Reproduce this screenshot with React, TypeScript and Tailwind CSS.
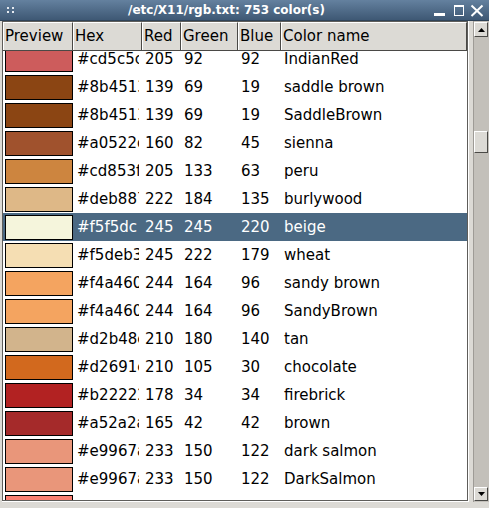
import React from "react";

type Row = [string, number, number, number, string];

const rows: Row[] = [
  ["#cd5c5c", 205, 92, 92, "IndianRed"],
  ["#8b4513", 139, 69, 19, "saddle brown"],
  ["#8b4513", 139, 69, 19, "SaddleBrown"],
  ["#a0522d", 160, 82, 45, "sienna"],
  ["#cd853f", 205, 133, 63, "peru"],
  ["#deb887", 222, 184, 135, "burlywood"],
  ["#f5f5dc", 245, 245, 220, "beige"],
  ["#f5deb3", 245, 222, 179, "wheat"],
  ["#f4a460", 244, 164, 96, "sandy brown"],
  ["#f4a460", 244, 164, 96, "SandyBrown"],
  ["#d2b48c", 210, 180, 140, "tan"],
  ["#d2691e", 210, 105, 30, "chocolate"],
  ["#b22222", 178, 34, 34, "firebrick"],
  ["#a52a2a", 165, 42, 42, "brown"],
  ["#e9967a", 233, 150, 122, "dark salmon"],
  ["#e9967a", 233, 150, 122, "DarkSalmon"],
  ["#fa8072", 250, 128, 114, "salmon"],
];

function HeaderCell({ label, w }: { label: string; w: string }) {
  return (
    <div
      className={`${w} shrink-0 h-full flex items-center pl-[1px] border-l border-t border-l-white border-t-white border-r border-r-[#4a4946] overflow-hidden whitespace-nowrap`}
    >
      {label}
    </div>
  );
}

function UpArrow() {
  return (
    <svg width="7" height="4" viewBox="0 0 7 4">
      <polygon points="0,4 7,4 3.5,0" fill="#000" />
    </svg>
  );
}

function DownArrow() {
  return (
    <svg width="7" height="4" viewBox="0 0 7 4">
      <polygon points="0,0 7,0 3.5,4" fill="#000" />
    </svg>
  );
}

export default function App() {
  return (
    <div className="w-[489px] h-[508px] bg-[#dcdad5] flex flex-col overflow-hidden font-['DejaVu_Sans',sans-serif] text-black">
      {/* Title bar */}
      <div className="h-[21px] shrink-0 flex items-center bg-gradient-to-b from-[#64819f] to-[#3e5874] border-b border-b-[#2e4257]">
        <div className="w-[28px] h-full flex items-start pt-[7px] pl-[7px]">
          <svg width="9" height="7" viewBox="0 0 9 7">
            <rect x="0" y="0" width="2" height="2" fill="#e6ebf1" />
            <rect x="5" y="0" width="2" height="2" fill="#e6ebf1" />
            <rect x="0" y="4" width="2" height="2" fill="#e6ebf1" />
            <rect x="5" y="4" width="2" height="2" fill="#e6ebf1" />
          </svg>
        </div>
        <div className="flex-1 text-center text-white font-bold text-[12px] leading-none whitespace-nowrap">
          /etc/X11/rgb.txt: 753 color(s)
        </div>
        <div className="w-[64px] h-full">
          <svg width="64" height="20" viewBox="0 0 64 20">
            <rect x="9" y="13" width="11" height="3" fill="#fff" />
            <rect x="29.5" y="5.5" width="9" height="10" fill="none" stroke="#fff" strokeWidth="1" />
            <rect x="29" y="5" width="10" height="2" fill="#fff" />
            <path d="M46.5 5.5 L57.5 16 M57.5 5.5 L46.5 16" stroke="#fff" strokeWidth="2" />
          </svg>
        </div>
      </div>

      {/* Body */}
      <div className="flex-1 min-h-0 flex pl-[2px] pb-[6px]">
        <div className="w-[467px] shrink-0 flex border-r border-b border-r-white border-b-white">
          <div className="w-[466px] flex flex-col border border-[#5e5d5a] bg-white overflow-hidden">
            {/* Header */}
            <div className="h-[29px] shrink-0 flex bg-[#dcdad5] border-b border-b-[#4a4946] text-[15px]">
              <HeaderCell label="Preview" w="w-[70px]" />
              <HeaderCell label="Hex" w="w-[69px]" />
              <HeaderCell label="Red" w="w-[39px]" />
              <HeaderCell label="Green" w="w-[57px]" />
              <HeaderCell label="Blue" w="w-[43px]" />
              <HeaderCell label="Color name" w="w-[186px]" />
            </div>
            {/* Rows */}
            <div className="flex-1 min-h-0 overflow-hidden">
              <div className="mt-[-6px] text-[15px]">
                {rows.map((r, i) => {
                  const sel = r[4] === "beige";
                  return (
                    <div
                      key={i}
                      className={`h-[28px] flex ${sel ? "bg-[#4b6983] text-white" : ""}`}
                    >
                      <div className="w-[70px] shrink-0 pt-[2px] pl-[2px]">
                        <div
                          className="w-[68px] h-[25px] border border-black"
                          style={{ backgroundColor: r[0] }}
                        />
                      </div>
                      <div className="w-[69px] shrink-0 pl-[4px] flex items-center">
                        <div className="w-[62px] overflow-hidden whitespace-nowrap">{r[0]}</div>
                      </div>
                      <div className="w-[39px] shrink-0 pl-[3px] flex items-center overflow-hidden whitespace-nowrap">
                        {r[1]}
                      </div>
                      <div className="w-[57px] shrink-0 pl-[3px] flex items-center overflow-hidden whitespace-nowrap">
                        {r[2]}
                      </div>
                      <div className="w-[43px] shrink-0 pl-[3px] flex items-center overflow-hidden whitespace-nowrap">
                        {r[3]}
                      </div>
                      <div className="w-[186px] shrink-0 pl-[3px] flex items-center overflow-hidden whitespace-nowrap">
                        {r[4]}
                      </div>
                    </div>
                  );
                })}
              </div>
            </div>
          </div>
        </div>
        {/* gap */}
        <div className="w-[4px] shrink-0" />
        {/* Scrollbar */}
        <div className="w-[16px] shrink-0 bg-[#c3c0ba] border-l border-l-[#9e9b96] flex flex-col pt-[1px] pb-[1px]">
          <div className="w-[14px] h-[15px] shrink-0 bg-[#dcdad5] border-t border-l border-t-white border-l-white border-r border-b border-r-[#4a4946] border-b-[#4a4946] flex items-center justify-center">
            <UpArrow />
          </div>
          <div className="mt-[94px] w-[14px] h-[22px] shrink-0 bg-[#dcdad5] border-t border-l border-t-white border-l-white border-r border-b border-r-[#4a4946] border-b-[#4a4946]" />
          <div className="flex-1" />
          <div className="w-[14px] h-[14px] shrink-0 bg-[#dcdad5] border-t border-l border-t-white border-l-white border-r border-b border-r-[#4a4946] border-b-[#4a4946] flex items-center justify-center">
            <DownArrow />
          </div>
        </div>
      </div>
    </div>
  );
}
